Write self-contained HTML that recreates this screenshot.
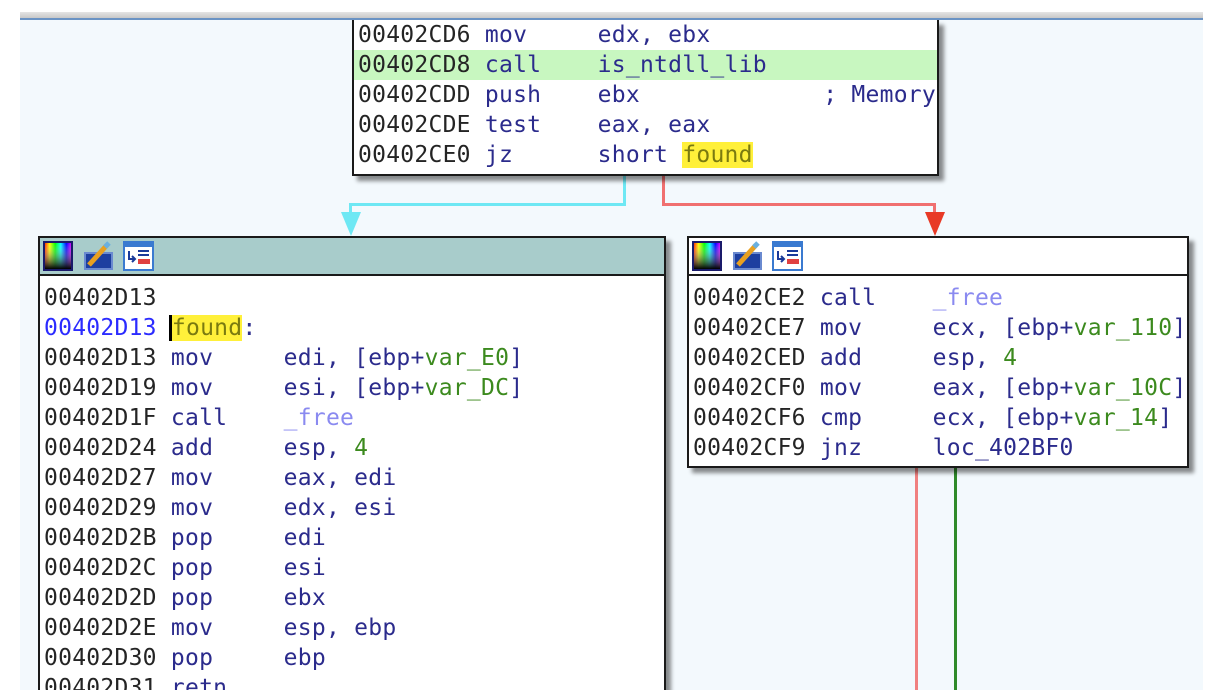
<!DOCTYPE html>
<html><head><style>
*{margin:0;padding:0;box-sizing:border-box}
html,body{width:1220px;height:690px;overflow:hidden}
body{background:#fff;position:relative;font-family:"DejaVu Sans Mono","Liberation Mono",monospace;font-size:23px;letter-spacing:0.25px}
#bg{position:absolute;left:20px;top:19px;width:1183px;height:671px;background:#f3f9fd}
#strip{position:absolute;left:20px;top:12px;width:1183px;height:6px;background:linear-gradient(#e4e4e4,#c8c8c8)}
#bl{position:absolute;left:20px;top:18px;width:1183px;height:2px;background:#6a93c4}
.blk{position:absolute;background:#fff;border:2px solid #1a1a1a;box-shadow:5px 5px 4px rgba(0,0,0,0.45)}
.ln{position:absolute;left:0;height:30px;line-height:30px;white-space:pre;color:#242424}
.m{color:#2b2b8c}.g{color:#3c8a1e}.p{color:#8a8af0}.b{color:#2b2bff}
.y{background:#fff03a;color:#7a7a10}
.hdr{position:absolute;left:0;top:0;right:0;height:38px;border-bottom:2px solid #1a1a1a}
.ic{position:absolute;top:3px;width:31px;height:30px}
.v{position:absolute}
</style></head><body>
<div id="bg"></div><div id="strip"></div><div id="bl"></div>
<div class="v" style="left:623px;top:176px;width:3px;height:30px;background:#6ee8f4"></div>
<div class="v" style="left:349px;top:203px;width:277px;height:3px;background:#6ee8f4"></div>
<div class="v" style="left:349px;top:203px;width:3px;height:20px;background:#6ee8f4"></div>
<svg class="v" style="left:340px;top:212px" width="22" height="26"><polygon points="1,0 21,0 11,24" fill="#6ee8f4"/></svg>
<div class="v" style="left:662px;top:176px;width:3px;height:30px;background:#f07070"></div>
<div class="v" style="left:662px;top:203px;width:274px;height:3px;background:#f07070"></div>
<div class="v" style="left:933px;top:203px;width:3px;height:20px;background:#f07070"></div>
<svg class="v" style="left:924px;top:212px" width="22" height="26"><polygon points="1,0 21,0 11,24" fill="#e83a26"/></svg>
<div class="v" style="left:915px;top:467px;width:3px;height:223px;background:#f08080"></div>
<div class="v" style="left:954px;top:467px;width:3px;height:223px;background:#2f8a2a"></div>

<div class="blk" style="left:352px;top:20px;width:587px;height:156px;border-top:none">
<div class="ln" style="top:0px;left:4px">00402CD6 <span class="m">mov     edx, ebx</span></div>
<div class="ln" style="top:30px;left:0;width:583px;background:#c8f7c0;padding-left:4px">00402CD8 <span class="m">call    is_ntdll_lib</span></div>
<div class="ln" style="top:60px;left:4px">00402CDD <span class="m">push    ebx             ; Memory</span></div>
<div class="ln" style="top:90px;left:4px">00402CDE <span class="m">test    eax, eax</span></div>
<div class="ln" style="top:120px;left:4px">00402CE0 <span class="m">jz      short <span class="y">found</span></span></div>
</div>

<svg width="0" height="0" style="position:absolute"><defs><linearGradient id="h1" x1="0" x2="1"><stop offset="0" stop-color="#f00"/><stop offset=".2" stop-color="#ff0"/><stop offset=".4" stop-color="#0f0"/><stop offset=".6" stop-color="#0ff"/><stop offset=".8" stop-color="#00f"/><stop offset="1" stop-color="#f0f"/></linearGradient><linearGradient id="h2" x1="0" y1="0" x2="0" y2="1"><stop offset="0" stop-color="#fff" stop-opacity="0"/><stop offset="1" stop-color="#000"/></linearGradient></defs></svg>

<div class="blk" style="left:38px;top:236px;width:628px;height:470px">
<div class="hdr" style="background:#a8cccb">
<svg class="ic" style="left:3px" viewBox="0 0 31 30"><rect x="1" y="1" width="28" height="28" fill="url(#h1)" stroke="#1a1a6a" stroke-width="2"/><rect x="2" y="2" width="26" height="26" fill="url(#h2)"/></svg>
<svg class="ic" style="left:43px" viewBox="0 0 31 30"><rect x="2" y="12" width="27" height="16" fill="#1d3fa0" stroke="#6a8ad0" stroke-width="2"/><path d="M6 24 L24 4" stroke="#e8a020" stroke-width="5"/><path d="M22 6 L26 2" stroke="#6ab0e0" stroke-width="5"/></svg>
<svg class="ic" style="left:83px" viewBox="0 0 31 30"><rect x="1" y="1" width="29" height="28" fill="#fff" stroke="#3a7ad0" stroke-width="2"/><rect x="1" y="1" width="29" height="5" fill="#3a7ad0"/><path d="M6 10 v8 h6 M9 15 l3 3 l-3 3 M15 10 h11 M15 14 h11" stroke="#1a3a9a" stroke-width="2" fill="none"/><rect x="15" y="18" width="12" height="5" fill="#e04040"/></svg>
</div>
<div class="ln" style="top:45px;left:4px">00402D13</div>
<div class="ln" style="top:75px;left:4px"><span class="b">00402D13</span> <span style="border-left:3px solid #000;margin-left:-2px"></span><span class="y">found</span><span class="m">:</span></div>
<div class="ln" style="top:105px;left:4px">00402D13 <span class="m">mov     edi, [ebp+<span class="g">var_E0</span>]</span></div>
<div class="ln" style="top:135px;left:4px">00402D19 <span class="m">mov     esi, [ebp+<span class="g">var_DC</span>]</span></div>
<div class="ln" style="top:165px;left:4px">00402D1F <span class="m">call    <span class="p">_free</span></span></div>
<div class="ln" style="top:195px;left:4px">00402D24 <span class="m">add     esp, <span class="g">4</span></span></div>
<div class="ln" style="top:225px;left:4px">00402D27 <span class="m">mov     eax, edi</span></div>
<div class="ln" style="top:255px;left:4px">00402D29 <span class="m">mov     edx, esi</span></div>
<div class="ln" style="top:285px;left:4px">00402D2B <span class="m">pop     edi</span></div>
<div class="ln" style="top:315px;left:4px">00402D2C <span class="m">pop     esi</span></div>
<div class="ln" style="top:345px;left:4px">00402D2D <span class="m">pop     ebx</span></div>
<div class="ln" style="top:375px;left:4px">00402D2E <span class="m">mov     esp, ebp</span></div>
<div class="ln" style="top:405px;left:4px">00402D30 <span class="m">pop     ebp</span></div>
<div class="ln" style="top:435px;left:4px">00402D31 <span class="m">retn</span></div>
</div>

<div class="blk" style="left:687px;top:236px;width:502px;height:232px">
<div class="hdr" style="background:#fff">
<svg class="ic" style="left:3px" viewBox="0 0 31 30"><rect x="1" y="1" width="28" height="28" fill="url(#h1)" stroke="#1a1a6a" stroke-width="2"/><rect x="2" y="2" width="26" height="26" fill="url(#h2)"/></svg>
<svg class="ic" style="left:43px" viewBox="0 0 31 30"><rect x="2" y="12" width="27" height="16" fill="#1d3fa0" stroke="#6a8ad0" stroke-width="2"/><path d="M6 24 L24 4" stroke="#e8a020" stroke-width="5"/><path d="M22 6 L26 2" stroke="#6ab0e0" stroke-width="5"/></svg>
<svg class="ic" style="left:83px" viewBox="0 0 31 30"><rect x="1" y="1" width="29" height="28" fill="#fff" stroke="#3a7ad0" stroke-width="2"/><rect x="1" y="1" width="29" height="5" fill="#3a7ad0"/><path d="M6 10 v8 h6 M9 15 l3 3 l-3 3 M15 10 h11 M15 14 h11" stroke="#1a3a9a" stroke-width="2" fill="none"/><rect x="15" y="18" width="12" height="5" fill="#e04040"/></svg>
</div>
<div class="ln" style="top:45px;left:4px">00402CE2 <span class="m">call    <span class="p">_free</span></span></div>
<div class="ln" style="top:75px;left:4px">00402CE7 <span class="m">mov     ecx, [ebp+<span class="g">var_110</span>]</span></div>
<div class="ln" style="top:105px;left:4px">00402CED <span class="m">add     esp, <span class="g">4</span></span></div>
<div class="ln" style="top:135px;left:4px">00402CF0 <span class="m">mov     eax, [ebp+<span class="g">var_10C</span>]</span></div>
<div class="ln" style="top:165px;left:4px">00402CF6 <span class="m">cmp     ecx, [ebp+<span class="g">var_14</span>]</span></div>
<div class="ln" style="top:195px;left:4px">00402CF9 <span class="m">jnz     loc_402BF0</span></div>
</div>
</body></html>
